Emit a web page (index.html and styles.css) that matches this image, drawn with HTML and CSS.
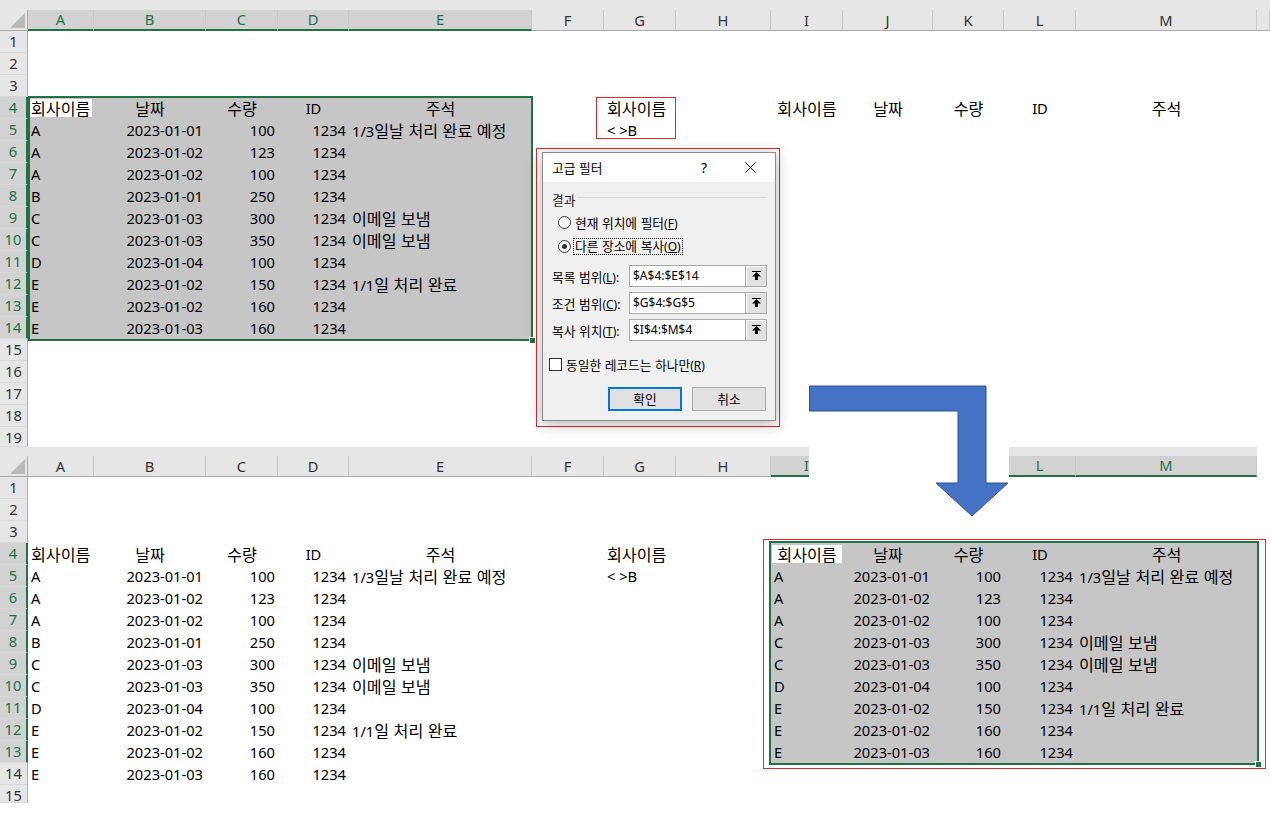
FILE: index.html
```html
<!DOCTYPE html>
<html lang="ko">
<head>
<meta charset="utf-8">
<title>고급 필터</title>
<link rel="stylesheet" href="styles.css">
</head>
<body>
<div class="strip"></div>
<div class="sheet sheet-top">
  <div class="corner"><svg width="27" height="20" viewBox="0 0 27 20"><polygon points="25,3 25,18 10,18" fill="#b9b9b9"/></svg></div>
  <div class="ch on cA">A</div>
  <div class="ch on cB">B</div>
  <div class="ch on cC">C</div>
  <div class="ch on cD">D</div>
  <div class="ch on cE">E</div>
  <div class="ch cF">F</div>
  <div class="ch cG">G</div>
  <div class="ch cH">H</div>
  <div class="ch cI">I</div>
  <div class="ch cJ">J</div>
  <div class="ch cK">K</div>
  <div class="ch cL">L</div>
  <div class="ch cM">M</div>
  <div class="ch cZ"></div>

  <div class="rh r1">1</div>
  <div class="rh r2">2</div>
  <div class="rh r3">3</div>
  <div class="rh on r4">4</div>
  <div class="rh on r5">5</div>
  <div class="rh on r6">6</div>
  <div class="rh on r7">7</div>
  <div class="rh on r8">8</div>
  <div class="rh on r9">9</div>
  <div class="rh on r10">10</div>
  <div class="rh on r11">11</div>
  <div class="rh on r12">12</div>
  <div class="rh on r13">13</div>
  <div class="rh on r14">14</div>
  <div class="rh r15">15</div>
  <div class="rh r16">16</div>
  <div class="rh r17">17</div>
  <div class="rh r18">18</div>
  <div class="rh r19">19</div>

  <div class="sel sel-top"></div>
  <div class="active act-top"></div>
  <div class="handle h-top"></div>

  <div class="t l r4 cA"><span class="k">회사이름</span></div>
  <div class="t c r4 cB"><span class="k">날짜</span></div>
  <div class="t c r4 cC"><span class="k">수량</span></div>
  <div class="t c r4 cD">ID</div>
  <div class="t c r4 cE"><span class="k">주석</span></div>
  <div class="t l r4 cG"><span class="k">회사이름</span></div>
  <div class="t c r4 cI"><span class="k">회사이름</span></div>
  <div class="t c r4 cJ"><span class="k">날짜</span></div>
  <div class="t c r4 cK"><span class="k">수량</span></div>
  <div class="t c r4 cL">ID</div>
  <div class="t c r4 cM"><span class="k">주석</span></div>

  <div class="t l r5 cA">A</div><div class="t r r5 cB">2023-01-01</div><div class="t r r5 cC">100</div><div class="t r r5 cD">1234</div><div class="t l r5 cE">1/3<span class="k">일날 처리 완료 예정</span></div>
  <div class="t l r5 cG">&lt; &gt;B</div>
  <div class="t l r6 cA">A</div><div class="t r r6 cB">2023-01-02</div><div class="t r r6 cC">123</div><div class="t r r6 cD">1234</div>
  <div class="t l r7 cA">A</div><div class="t r r7 cB">2023-01-02</div><div class="t r r7 cC">100</div><div class="t r r7 cD">1234</div>
  <div class="t l r8 cA">B</div><div class="t r r8 cB">2023-01-01</div><div class="t r r8 cC">250</div><div class="t r r8 cD">1234</div>
  <div class="t l r9 cA">C</div><div class="t r r9 cB">2023-01-03</div><div class="t r r9 cC">300</div><div class="t r r9 cD">1234</div><div class="t l r9 cE"><span class="k">이메일 보냄</span></div>
  <div class="t l r10 cA">C</div><div class="t r r10 cB">2023-01-03</div><div class="t r r10 cC">350</div><div class="t r r10 cD">1234</div><div class="t l r10 cE"><span class="k">이메일 보냄</span></div>
  <div class="t l r11 cA">D</div><div class="t r r11 cB">2023-01-04</div><div class="t r r11 cC">100</div><div class="t r r11 cD">1234</div>
  <div class="t l r12 cA">E</div><div class="t r r12 cB">2023-01-02</div><div class="t r r12 cC">150</div><div class="t r r12 cD">1234</div><div class="t l r12 cE">1/1<span class="k">일 처리 완료</span></div>
  <div class="t l r13 cA">E</div><div class="t r r13 cB">2023-01-02</div><div class="t r r13 cC">160</div><div class="t r r13 cD">1234</div>
  <div class="t l r14 cA">E</div><div class="t r r14 cB">2023-01-03</div><div class="t r r14 cC">160</div><div class="t r r14 cD">1234</div>

  <div class="red red-g"></div>
</div>

<div class="strip strip-b"></div>
<div class="sheet sheet-bot">
  <div class="corner"><svg width="27" height="20" viewBox="0 0 27 20"><polygon points="25,3 25,18 10,18" fill="#b9b9b9"/></svg></div>
  <div class="ch cA">A</div>
  <div class="ch cB">B</div>
  <div class="ch cC">C</div>
  <div class="ch cD">D</div>
  <div class="ch cE">E</div>
  <div class="ch cF">F</div>
  <div class="ch cG">G</div>
  <div class="ch cH">H</div>
  <div class="ch on cI">I</div>
  <div class="ch on cJ">J</div>
  <div class="ch on cK">K</div>
  <div class="ch on cL">L</div>
  <div class="ch on cM">M</div>

  <div class="rh r1">1</div>
  <div class="rh r2">2</div>
  <div class="rh r3">3</div>
  <div class="rh on r4">4</div>
  <div class="rh on r5">5</div>
  <div class="rh on r6">6</div>
  <div class="rh on r7">7</div>
  <div class="rh on r8">8</div>
  <div class="rh on r9">9</div>
  <div class="rh on r10">10</div>
  <div class="rh on r11">11</div>
  <div class="rh on r12">12</div>
  <div class="rh on r13">13</div>
  <div class="rh r14">14</div>
  <div class="rh r15">15</div>

  <div class="sel sel-bot"></div>
  <div class="active act-bot"></div>
  <div class="handle h-bot"></div>

  <div class="t l r4 cA"><span class="k">회사이름</span></div>
  <div class="t c r4 cB"><span class="k">날짜</span></div>
  <div class="t c r4 cC"><span class="k">수량</span></div>
  <div class="t c r4 cD">ID</div>
  <div class="t c r4 cE"><span class="k">주석</span></div>
  <div class="t l r4 cG"><span class="k">회사이름</span></div>

  <div class="t l r5 cA">A</div><div class="t r r5 cB">2023-01-01</div><div class="t r r5 cC">100</div><div class="t r r5 cD">1234</div><div class="t l r5 cE">1/3<span class="k">일날 처리 완료 예정</span></div>
  <div class="t l r5 cG">&lt; &gt;B</div>
  <div class="t l r6 cA">A</div><div class="t r r6 cB">2023-01-02</div><div class="t r r6 cC">123</div><div class="t r r6 cD">1234</div>
  <div class="t l r7 cA">A</div><div class="t r r7 cB">2023-01-02</div><div class="t r r7 cC">100</div><div class="t r r7 cD">1234</div>
  <div class="t l r8 cA">B</div><div class="t r r8 cB">2023-01-01</div><div class="t r r8 cC">250</div><div class="t r r8 cD">1234</div>
  <div class="t l r9 cA">C</div><div class="t r r9 cB">2023-01-03</div><div class="t r r9 cC">300</div><div class="t r r9 cD">1234</div><div class="t l r9 cE"><span class="k">이메일 보냄</span></div>
  <div class="t l r10 cA">C</div><div class="t r r10 cB">2023-01-03</div><div class="t r r10 cC">350</div><div class="t r r10 cD">1234</div><div class="t l r10 cE"><span class="k">이메일 보냄</span></div>
  <div class="t l r11 cA">D</div><div class="t r r11 cB">2023-01-04</div><div class="t r r11 cC">100</div><div class="t r r11 cD">1234</div>
  <div class="t l r12 cA">E</div><div class="t r r12 cB">2023-01-02</div><div class="t r r12 cC">150</div><div class="t r r12 cD">1234</div><div class="t l r12 cE">1/1<span class="k">일 처리 완료</span></div>
  <div class="t l r13 cA">E</div><div class="t r r13 cB">2023-01-02</div><div class="t r r13 cC">160</div><div class="t r r13 cD">1234</div>
  <div class="t l r14 cA">E</div><div class="t r r14 cB">2023-01-03</div><div class="t r r14 cC">160</div><div class="t r r14 cD">1234</div>

  <div class="t c r4 cI"><span class="k">회사이름</span></div>
  <div class="t c r4 cJ"><span class="k">날짜</span></div>
  <div class="t c r4 cK"><span class="k">수량</span></div>
  <div class="t c r4 cL">ID</div>
  <div class="t c r4 cM"><span class="k">주석</span></div>
  <div class="t l r5 cI">A</div><div class="t r r5 cJ">2023-01-01</div><div class="t r r5 cK">100</div><div class="t r r5 cL">1234</div><div class="t l r5 cM">1/3<span class="k">일날 처리 완료 예정</span></div>
  <div class="t l r6 cI">A</div><div class="t r r6 cJ">2023-01-02</div><div class="t r r6 cK">123</div><div class="t r r6 cL">1234</div>
  <div class="t l r7 cI">A</div><div class="t r r7 cJ">2023-01-02</div><div class="t r r7 cK">100</div><div class="t r r7 cL">1234</div>
  <div class="t l r8 cI">C</div><div class="t r r8 cJ">2023-01-03</div><div class="t r r8 cK">300</div><div class="t r r8 cL">1234</div><div class="t l r8 cM"><span class="k">이메일 보냄</span></div>
  <div class="t l r9 cI">C</div><div class="t r r9 cJ">2023-01-03</div><div class="t r r9 cK">350</div><div class="t r r9 cL">1234</div><div class="t l r9 cM"><span class="k">이메일 보냄</span></div>
  <div class="t l r10 cI">D</div><div class="t r r10 cJ">2023-01-04</div><div class="t r r10 cK">100</div><div class="t r r10 cL">1234</div>
  <div class="t l r11 cI">E</div><div class="t r r11 cJ">2023-01-02</div><div class="t r r11 cK">150</div><div class="t r r11 cL">1234</div><div class="t l r11 cM">1/1<span class="k">일 처리 완료</span></div>
  <div class="t l r12 cI">E</div><div class="t r r12 cJ">2023-01-02</div><div class="t r r12 cK">160</div><div class="t r r12 cL">1234</div>
  <div class="t l r13 cI">E</div><div class="t r r13 cJ">2023-01-03</div><div class="t r r13 cK">160</div><div class="t r r13 cL">1234</div>

  <div class="red red-res"></div>
</div>

<div class="dlg-mark">
  <div class="dlg">
    <div class="dlg-title">
      <span class="dlg-name"><span class="k">고급 필터</span></span>
      <span class="help">?</span>
      <span class="close"><svg width="11" height="11" viewBox="0 0 11 11"><path d="M0.5 0.5 L10.5 10.5 M10.5 0.5 L0.5 10.5" stroke="#000" stroke-width="1" fill="none"/></svg></span>
    </div>
    <div class="dlg-body">
      <div class="grp"><span class="k">결과</span><span class="line"></span></div>
      <div class="radio-row first"><span class="radio"></span><span><span class="k">현재 위치에 필터</span>(<u>F</u>)</span></div>
      <div class="radio-row"><span class="radio checked"></span><span class="focus"><span class="k">다른 장소에 복사</span>(<u>O</u>)</span></div>
      <div class="field first"><span class="flabel"><span class="k">목록 범위</span>(<u>L</u>):</span><div class="inp"><span>$A$4:$E$14</span><span class="pick"><svg width="11" height="11" viewBox="0 0 11 11"><path d="M5.5 1 L10 5.5 L7 5.5 L7 9 L4 9 L4 5.5 L1 5.5 Z" fill="#000"/><rect x="1" y="0" width="9" height="1" fill="#000"/></svg></span></div></div>
      <div class="field"><span class="flabel"><span class="k">조건 범위</span>(<u>C</u>):</span><div class="inp"><span>$G$4:$G$5</span><span class="pick"><svg width="11" height="11" viewBox="0 0 11 11"><path d="M5.5 1 L10 5.5 L7 5.5 L7 9 L4 9 L4 5.5 L1 5.5 Z" fill="#000"/><rect x="1" y="0" width="9" height="1" fill="#000"/></svg></span></div></div>
      <div class="field"><span class="flabel"><span class="k">복사 위치</span>(<u>T</u>):</span><div class="inp"><span>$I$4:$M$4</span><span class="pick"><svg width="11" height="11" viewBox="0 0 11 11"><path d="M5.5 1 L10 5.5 L7 5.5 L7 9 L4 9 L4 5.5 L1 5.5 Z" fill="#000"/><rect x="1" y="0" width="9" height="1" fill="#000"/></svg></span></div></div>
      <div class="chk-row"><span class="chk"></span><span><span class="k">동일한 레코드는 하나만</span>(<u>R</u>)</span></div>
      <div class="btns"><span class="btn def"><span class="k">확인</span></span><span class="btn"><span class="k">취소</span></span></div>
    </div>
  </div>
</div>

<div class="arrow">
  <svg width="200" height="140" viewBox="0 0 200 140">
    <rect x="0" y="0" width="200" height="140" fill="#fff"/>
    <polygon points="0.5,6 177,6 177,103 199,103 163,136 127,103 149,103 149,31 0.5,31" fill="#4472c4" stroke="#2f528f" stroke-width="1"/>
  </svg>
</div>
</body>
</html>
```

FILE: styles.css
```css
* { box-sizing: border-box; }

body {
  margin: 0;
  width: 1270px;
  height: 835px;
  overflow: hidden;
  background: #fff;
  position: relative;
  font-family: "Noto Sans", "Noto Sans CJK KR", sans-serif;
  color: #000;
}

.k { font-family: "Noto Sans CJK KR", sans-serif; font-size: 1.1em; }
.dlg .k { font-size: 1.06em; }

.strip { height: 10px; background: #e6e6e6; }
.strip-b { height: 9px; width: 1257px; }

.sheet {
  display: grid;
  grid-template-columns: 28px 66px 112px 72px 71px 183px 72px 72px 95px 72px 90px 71px 72px 181px 1fr;
  font-size: 14.67px;
}
.sheet-top { grid-template-rows: 21px repeat(18, 22px) 20px; }
.sheet-bot { grid-template-rows: 21px repeat(14, 22px) 18px; width: 1257px; }

.cA { grid-column: 2; }
.cB { grid-column: 3; }
.cC { grid-column: 4; }
.cD { grid-column: 5; }
.cE { grid-column: 6; }
.cF { grid-column: 7; }
.cG { grid-column: 8; }
.cH { grid-column: 9; }
.cI { grid-column: 10; }
.cJ { grid-column: 11; }
.cK { grid-column: 12; }
.cL { grid-column: 13; }
.cM { grid-column: 14; }
.cZ { grid-column: 15; }

.r1 { grid-row: 2; }
.r2 { grid-row: 3; }
.r3 { grid-row: 4; }
.r4 { grid-row: 5; }
.r5 { grid-row: 6; }
.r6 { grid-row: 7; }
.r7 { grid-row: 8; }
.r8 { grid-row: 9; }
.r9 { grid-row: 10; }
.r10 { grid-row: 11; }
.r11 { grid-row: 12; }
.r12 { grid-row: 13; }
.r13 { grid-row: 14; }
.r14 { grid-row: 15; }
.r15 { grid-row: 16; }
.r16 { grid-row: 17; }
.r17 { grid-row: 18; }
.r18 { grid-row: 19; }
.r19 { grid-row: 20; }

.corner {
  grid-row: 1;
  grid-column: 1;
  background: #e6e6e6;
  border-right: 1px solid #ababab;
  border-bottom: 1px solid #ababab;
}
.corner svg { display: block; }

.ch {
  grid-row: 1;
  background: #e6e6e6;
  border-right: 1px solid #c8c8c8;
  border-bottom: 1px solid #ababab;
  text-align: center;
  line-height: 20px;
  color: #333;
}
.ch.on {
  background: #d2d2d2;
  color: #217346;
  border-bottom: 2px solid #217346;
  line-height: 19px;
}

.rh {
  grid-column: 1;
  background: #e6e6e6;
  border-right: 1px solid #ababab;
  border-bottom: 1px solid #d8d8d8;
  text-align: center;
  line-height: 21px;
  color: #333;
}
.rh.on {
  background: #d2d2d2;
  color: #217346;
  border-right: 2px solid #217346;
}

.sel {
  background: #c6c6c6;
  border: 2px solid #217346;
}
.sel-top { grid-column: 2 / 7; grid-row: 5 / 16; margin: -1px -1px -2px 0; }
.sel-bot { grid-column: 10 / 15; grid-row: 5 / 15; margin: -2px; }

.handle {
  width: 7px;
  height: 7px;
  background: #217346;
  border: 1px solid #fff;
  justify-self: end;
  align-self: end;
}
.h-top { grid-column: 6; grid-row: 15; margin: 0 -4px -5px 0; }
.h-bot { grid-column: 14; grid-row: 14; margin: 0 -5px -5px 0; }

.active { background: #fff; }
.act-top { grid-column: 2; grid-row: 5; margin: 2px 2px 2px 2px; }
.act-bot { grid-column: 10; grid-row: 5; margin: 2px 1px 2px 1px; }

.t {
  line-height: 22px;
  white-space: nowrap;
  padding: 0 3px;
}
.t.l { text-align: left; }
.t.r { text-align: right; }
.t.c { text-align: center; }

.red { border: 1px solid #e5262b; }
.red-g { grid-column: 8; grid-row: 5 / 7; margin: 0 0 2px -8px; }
.red-res { grid-column: 10 / 15; grid-row: 5 / 15; margin: -4px -9px -6px -8px; }

/* dialog */
.dlg-mark {
  position: absolute;
  left: 536px;
  top: 148px;
  width: 244px;
  height: 279px;
  padding: 3px 3px 5px 5px;
  border: 1px solid #e5262b;
}
.dlg {
  width: 234px;
  height: 269px;
  border: 1px solid #8a8a8a;
  background: #f0f0f0;
  box-shadow: 0 3px 14px rgba(0, 0, 0, 0.3);
  font-size: 12px;
  display: flex;
  flex-direction: column;
}
.dlg-title {
  height: 29px;
  background: #fff;
  display: flex;
  align-items: center;
  padding-left: 9px;
}
.dlg-name { flex: 1; font-size: 12px; }
.help { width: 42px; text-align: center; font-size: 14px; }
.close { width: 50px; display: flex; justify-content: center; }
.close svg { display: block; }

.dlg-body {
  flex: 1;
  padding: 8px 8px 0 9px;
  display: flex;
  flex-direction: column;
}
.grp {
  height: 18px;
  display: flex;
  align-items: center;
  gap: 2px;
  color: #222;
}
.grp .line { flex: 1; height: 1px; background: #dcdcdc; margin-top: -3px; }

.radio-row {
  height: 24px;
  display: flex;
  align-items: center;
  gap: 4px;
  padding-left: 6px;
}
.radio-row.first { margin-top: 2px; }
.radio {
  width: 13px;
  height: 13px;
  border: 1px solid #333;
  border-radius: 50%;
  background: #fff;
  display: flex;
  align-items: center;
  justify-content: center;
}
.radio.checked::after {
  content: "";
  width: 5px;
  height: 5px;
  border-radius: 50%;
  background: #333;
}
.focus {
  border: 1px dotted #000;
  padding: 0 1px;
  margin-left: -2px;
  line-height: 14px;
}

.field {
  height: 22px;
  display: flex;
  align-items: center;
  margin-top: 5px;
}
.field.first { margin-top: 7px; }
.flabel { width: 77px; white-space: nowrap; }
.inp {
  width: 138px;
  height: 22px;
  border: 1px solid #a9a9a9;
  background: #fff;
  display: flex;
}
.inp > span:first-child { flex: 1; padding-left: 3px; line-height: 20px; }
.pick {
  width: 21px;
  background: #e1e1e1;
  border-left: 1px solid #a9a9a9;
  box-shadow: inset 1px 1px 0 #fff;
  display: flex;
  align-items: center;
  justify-content: center;
}
.pick svg { display: block; }

.chk-row {
  margin-top: 13px;
  height: 20px;
  display: flex;
  align-items: center;
  gap: 4px;
  margin-left: -3px;
}
.chk {
  width: 13px;
  height: 13px;
  border: 1px solid #333;
  background: #fff;
}

.btns {
  margin-top: 13px;
  display: flex;
  justify-content: flex-end;
  gap: 10px;
  margin-right: 1px;
}
.btn {
  width: 74px;
  height: 24px;
  border: 1px solid #adadad;
  background: #e1e1e1;
  text-align: center;
  line-height: 22px;
}
.btn.def { border: 2px solid #0078d7; line-height: 20px; }

.arrow {
  position: absolute;
  left: 809px;
  top: 380px;
}
.arrow svg { display: block; }
```
